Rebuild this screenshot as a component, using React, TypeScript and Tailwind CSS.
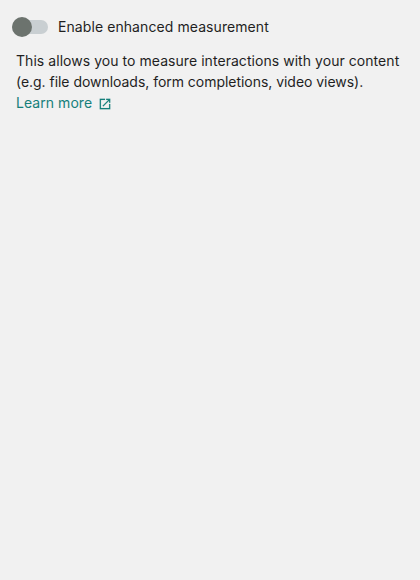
export default function App() {
  return (
    <main className="h-screen bg-[#f1f1f1] pt-[17px] pl-3 font-['Inter',sans-serif] text-sm text-[#1f1f1f]">
      <div className="flex h-5 items-center">
        <button role="switch" aria-checked="false" aria-label="Enable enhanced measurement" className="flex h-5 w-9 items-center">
          <span className="flex h-3.5 w-9 items-center rounded-full bg-[#c9cfd2]">
            <span className="size-5 shrink-0 rounded-full bg-[#6c736e]" />
          </span>
        </button>
        <span className="ml-2.5 whitespace-nowrap tracking-[0.08px]">Enable enhanced measurement</span>
      </div>
      <div className="mt-[13px] ml-1 whitespace-nowrap leading-[21px]">
        <p className="tracking-[0.05px]">This allows you to measure interactions with your content</p>
        <p className="tracking-[-0.035px]">(e.g. file downloads, form completions, video views).</p>
        <a className="flex items-center gap-1.5 text-[#16807b]">
          <span className="tracking-[0.05px]">Learn more</span>
          <svg className="mt-0.5" width="14" height="14" viewBox="0 0 24 24" fill="currentColor">
            <path d="M19 19H5V5h7V3H3v18h18v-9h-2v7zM14 3v2h3.59l-9.83 9.83 1.41 1.41L19 6.41V10h2V3h-7z" stroke="currentColor" strokeWidth=".2" />
          </svg>
        </a>
      </div>
    </main>
  );
}
